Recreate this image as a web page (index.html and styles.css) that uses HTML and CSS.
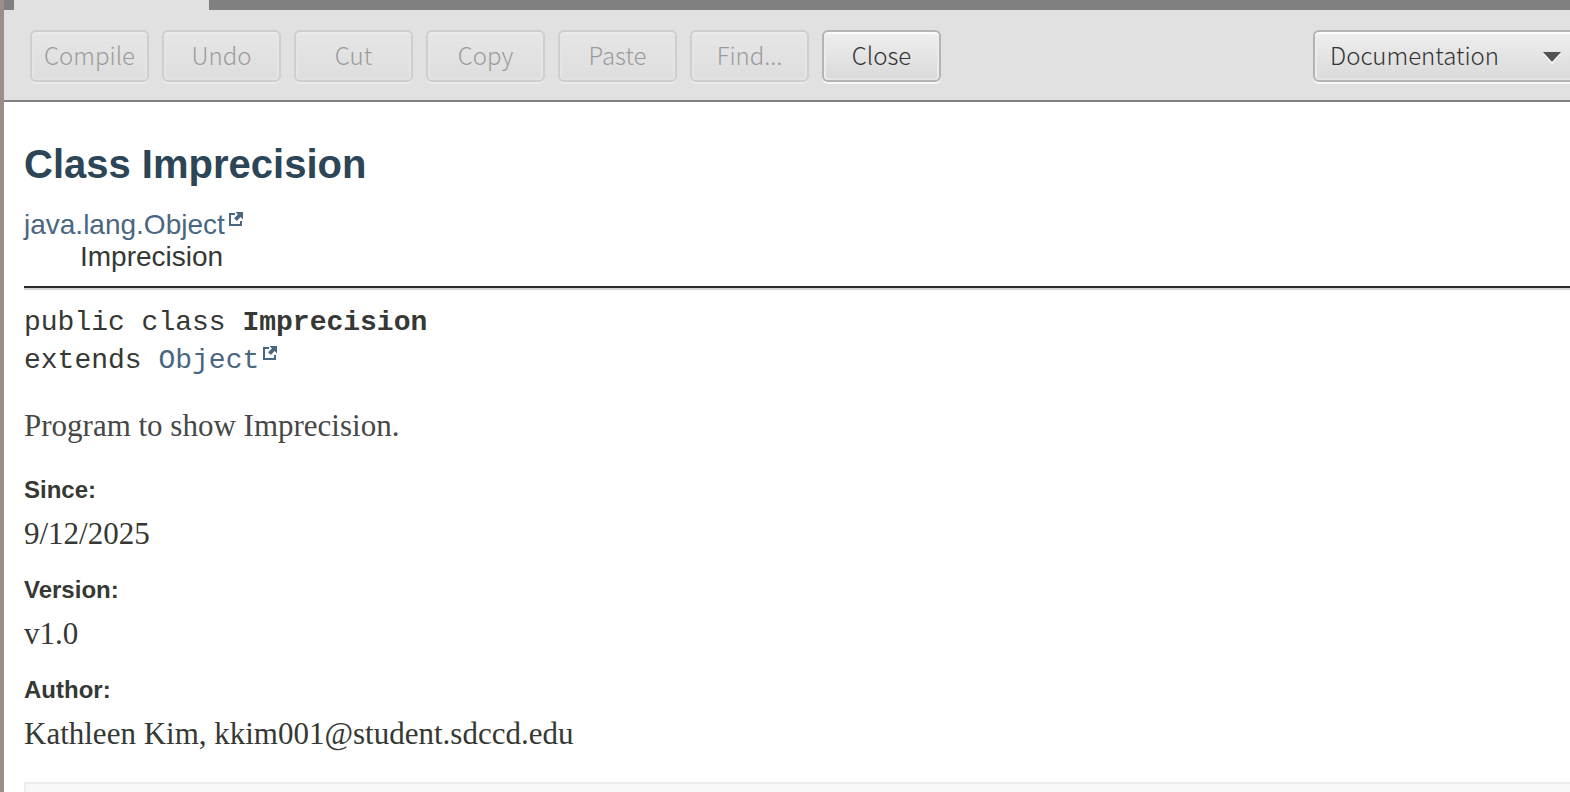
FILE: index.html
```html
<!DOCTYPE html>
<html lang="en">
<head>
<meta charset="utf-8">
<title>Imprecision</title>
<link rel="stylesheet" href="styles.css">
</head>
<body>
<svg class="defs" aria-hidden="true">
  <symbol id="external" viewBox="0 0 14 14">
    <path d="M6 2H1V13H12V9" fill="none" stroke="currentColor" stroke-width="2"/>
    <path d="M6.500 0H14V7.500L11.600 5.100L7.800 8.900L5.100 6.200L8.900 2.400Z" fill="currentColor"/>
  </symbol>
</svg>
<div class="window">
  <div class="tabs"><div class="tab"></div></div>
  <div class="toolbar">
    <button class="tool" disabled>Compile</button>
    <button class="tool" disabled>Undo</button>
    <button class="tool" disabled>Cut</button>
    <button class="tool" disabled>Copy</button>
    <button class="tool" disabled>Paste</button>
    <button class="tool" disabled>Find...</button>
    <button class="tool">Close</button>
    <div class="view">
      <select class="view-select" aria-label="View">
        <option>Documentation</option>
        <option>Source Code</option>
      </select>
      <svg class="view-arrow" viewBox="0 0 18 12" aria-hidden="true"><path d="M0 2H18L9 12Z" fill="#fff"/><path d="M0 0H18L9 10Z" fill="#525252"/></svg>
    </div>
  </div>
  <main class="doc">
    <h1 class="title">Class Imprecision</h1>
    <div class="inheritance">
      <a class="link" href="#object">java.lang.Object<svg class="external"><use href="#external"/></svg></a>
      <div class="child">Imprecision</div>
    </div>
    <hr class="rule">
    <div class="signature">
      <div>public class <b>Imprecision</b></div>
      <div>extends <a class="link" href="#object">Object<svg class="external"><use href="#external"/></svg></a></div>
    </div>
    <p class="description">Program to show Imprecision.</p>
    <dl class="notes">
      <dt>Since:</dt>
      <dd>9/12/2025</dd>
      <dt>Version:</dt>
      <dd>v1.0</dd>
      <dt>Author:</dt>
      <dd>Kathleen Kim, kkim001@student.sdccd.edu</dd>
    </dl>
    <section class="summary"></section>
  </main>
</div>
</body>
</html>
```
FILE: styles.css
```css
* {
  box-sizing: border-box;
}

body {
  margin: 0;
  height: 100vh;
  overflow: hidden;
  background: #fff;
  color: #353833;
  font-family: "Liberation Sans", Arial, sans-serif;
}

.defs {
  display: none;
}

.window {
  min-height: 100vh;
  border-left: 4px solid #989086;
  display: flex;
  flex-direction: column;
}

.tabs {
  height: 10px;
  padding-left: 10px;
  background: #808080;
}

.tab {
  width: 195px;
  height: 100%;
  background: #e1e1e1;
}

.toolbar {
  display: flex;
  gap: 13px;
  padding: 20px 0 18px 26px;
  background: #e1e1e1;
  border-bottom: 2px solid #808080;
}

.tool,
.view-select {
  height: 52px;
  border: 2px solid #b4b4b4;
  border-radius: 6px;
  background: linear-gradient(#efefef, #d9d9d9);
  box-shadow: inset 0 2px #fbfbfb, inset 2px 0 #ececec, inset -2px 0 #ececec, inset 0 -2px #e3e3e3, 0 2px #f8f8f8;
  color: #333;
  font-family: "Noto Sans CJK SC", "Noto Sans", sans-serif;
  font-size: 24px;
  font-weight: 300;
  line-height: 36px;
}

.tool {
  width: 119px;
  padding: 0 0 2px;
}

.tool:disabled {
  opacity: 0.4;
}

.view {
  position: relative;
  margin-left: auto;
  margin-right: -12px;
}

.view-select {
  width: 269px;
  padding: 0 15px 2px;
  appearance: none;
}

.view-arrow {
  position: absolute;
  right: 21px;
  top: 22px;
  width: 18px;
  height: 12px;
  pointer-events: none;
}

.doc {
  flex: 1;
  display: flex;
  flex-direction: column;
  padding: 39px 0 0 20px;
}

.title {
  margin: 0;
  color: #2c4557;
  font-size: 40px;
  line-height: 46px;
}

.inheritance {
  margin-top: 22px;
  font-size: 28px;
  line-height: 32px;
}

.child {
  padding-left: 56px;
}

.link {
  color: #4a6782;
  text-decoration: none;
}

.external {
  width: 14px;
  height: 14px;
  margin-left: 4px;
  vertical-align: 8px;
}

.rule {
  width: 100%;
  margin: 13px 0 0;
  border: 0;
  border-top: 2px solid #2b2b2e;
  border-bottom: 2px solid #d3d3d3;
}

.signature {
  margin-top: 14px;
  font-family: "Liberation Mono", "Courier New", monospace;
  font-size: 28px;
  line-height: 38px;
}

.description {
  margin: 26px 0 0;
  color: #474747;
  font-family: Georgia, "Liberation Serif", serif;
  font-size: 31px;
  line-height: 40px;
}

.notes {
  margin: 24px 0 0;
}

.notes dt {
  font-size: 24px;
  font-weight: bold;
  line-height: 40px;
}

.notes dd {
  margin: 0 0 16px;
  padding: 4px 0 0;
  font-family: Georgia, "Liberation Serif", serif;
  font-size: 31px;
  line-height: 40px;
}

.summary {
  flex: 1;
  margin-top: 12px;
  min-height: 10px;
  border: 2px solid #ededed;
  border-right: 0;
  border-bottom: 0;
  background: #f8f8f8;
}
```
